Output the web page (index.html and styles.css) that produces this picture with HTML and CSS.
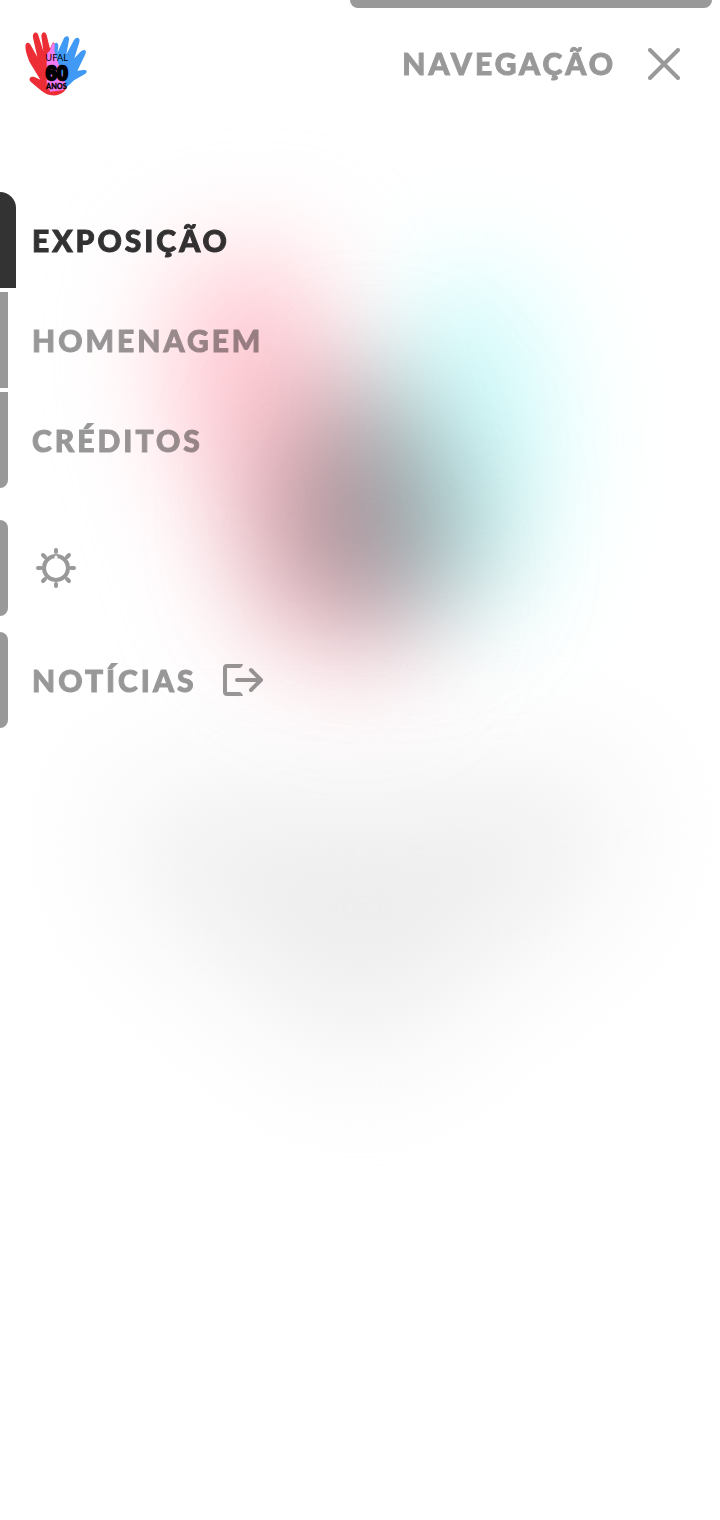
FILE: index.html
```html
<!DOCTYPE html>
<html lang="pt-BR">
<head>
<meta charset="utf-8">
<meta name="viewport" content="width=device-width, initial-scale=1">
<title>UFAL 60 Anos</title>
<link rel="stylesheet" href="styles.css">
</head>
<body>
<svg class="backdrop" viewBox="0 0 720 1520" aria-hidden="true">
  <defs>
    <filter id="soft" x="-100%" y="-100%" width="300%" height="300%" color-interpolation-filters="sRGB"><feGaussianBlur stdDeviation="56"/></filter>
    <filter id="softer" x="-100%" y="-100%" width="300%" height="300%" color-interpolation-filters="sRGB"><feGaussianBlur stdDeviation="66"/></filter>
  </defs>
  <path class="glow-shade" filter="url(#softer)" d="M120 790 L350 800 L620 770 L590 890 L460 980 L360 1070 L270 990 L150 900Z"/>
  <path class="glow-red" filter="url(#soft)" d="M180 270 L290 250 L370 430 L430 600 L370 680 L260 630 L170 400Z"/>
  <path class="glow-cyan" filter="url(#soft)" d="M430 270 L530 290 L560 450 L520 600 L400 620 L330 560 L370 430Z"/>
  <path class="glow-core" filter="url(#soft)" d="M350 370 L400 380 L480 500 L460 600 L370 620 L280 590 L270 470Z"/>
</svg>

<header class="top">
  <a class="logo" href="#" aria-label="UFAL 60 Anos">
    <svg viewBox="0 0 192 192">
      <path fill="#ec2d35" d="M18 92C9 71 2 50 5 38C9 28 18 32 22 43L40 75L27 17C25 4 35-4 42 7L58 57L52 12C54-3 65-2 68 10L78 50L84 36C90 25 95 36 91 52L132 154C128 180 108 193 82 190C63 187 53 176 42 168L20 149C11 139 22 131 33 136L49 143Z"/>
      <path fill="#4099f5" d="M78 65L91 36C98 27 106 36 102 50L100 63L119 20C127 7 139 13 134 29L127 67L150 24C160 11 171 19 165 34L151 79L168 61C180 49 190 54 184 67L160 116L173 115C188 112 193 119 183 126L150 145L128 166L80 170Z"/>
      <path fill="#f37af0" d="M78 55L84 37C92 28 94 41 91 54L94 70L125 155L118 174L79 179L68 160V66Z"/>
      <text class="logo-ufal" x="64" y="87">UFAL</text>
      <text class="logo-sixty" x="65" y="144">60</text>
      <text class="logo-anos" x="66" y="172">ANOS</text>
    </svg>
  </a>
  <button class="toggle" type="button">
    <span class="label">NAVEGAÇÃO</span>
    <svg class="close" viewBox="0 0 32 32" aria-hidden="true"><path d="M2 2L30 30M30 2L2 30"/></svg>
  </button>
</header>

<nav class="menu" aria-label="Navegação">
  <div class="group">
    <a class="item active" href="#" aria-current="page"><span class="label">EXPOSIÇÃO</span></a>
    <a class="item" href="#"><span class="label">HOMENAGEM</span></a>
    <a class="item last" href="#"><span class="label">CRÉDITOS</span></a>
  </div>
  <div class="extras">
    <button class="item single" type="button" aria-label="Alternar tema">
      <svg class="sun" viewBox="0 0 48 48" aria-hidden="true">
        <circle cx="24" cy="24" r="12"/>
        <path d="M24 6V8M24 40V42M6 24H9M39 24H42M11 11L13 13M35 35L37 37M37 11L35 13M13 35L11 37"/>
        <path class="notch" d="M22 14L24 11L26 14Z"/>
      </svg>
    </button>
    <a class="item single" href="#">
      <span class="label">NOTÍCIAS</span>
      <svg class="exit" viewBox="0 0 40 32" aria-hidden="true">
        <path class="frame" d="M20 0H4Q0 0 0 4V28Q0 32 4 32H20Q19 28 16 28H4V4H16Q19 4 20 0Z"/>
        <path d="M14 16H37M28 6L38 16L28 26"/>
      </svg>
    </a>
  </div>
</nav>
</body>
</html>
```
FILE: styles.css
```css
* { box-sizing: border-box; }

body {
  margin: 0;
  min-height: 100vh;
  position: relative;
  overflow-x: hidden;
  background: #fff;
  color: #000;
  font: 900 30px/40px Lato, "Liberation Sans", sans-serif;
  letter-spacing: 3px;
}

a { color: inherit; text-decoration: none; }

button {
  border: 0;
  margin: 0;
  padding: 0;
  background: none;
  color: inherit;
  font: inherit;
  letter-spacing: inherit;
  text-align: left;
  cursor: pointer;
}

svg { display: block; flex: none; }

.label {
  opacity: .4;
  -webkit-text-stroke: 1px currentColor;
}

.backdrop {
  position: absolute;
  z-index: -1;
  top: 0;
  left: 0;
  width: 100%;
}
.backdrop > * { mix-blend-mode: multiply; }
.glow-red { fill: #ffc6d0; }
.glow-cyan { fill: #d0fcfc; }
.glow-core { fill: #bababa; }
.glow-shade { fill: #ededed; }

.top {
  display: flex;
  justify-content: space-between;
  align-items: flex-start;
  padding: 0 8px 0 24px;
}

.logo { margin-top: 32px; }
.logo svg { width: 64px; height: 64px; overflow: visible; }
.logo text { fill: #000; letter-spacing: 0; }
.logo-ufal { font: 400 28px Lato, sans-serif; }
.logo-sixty {
  font: 700 60px "Liberation Sans", sans-serif;
  stroke: #000;
  stroke-width: 7px;
}
.logo-anos {
  font: 900 22px Lato, sans-serif;
  stroke: #000;
  stroke-width: 1px;
}

.toggle {
  display: grid;
  grid-template-columns: auto auto;
  grid-template-rows: 8px 112px;
  align-items: center;
  column-gap: 32px;
  height: 128px;
  padding-bottom: 8px;
}
.toggle::before {
  content: "";
  grid-column: 1 / -1;
  align-self: stretch;
  background: #999;
  border-radius: 0 0 8px 8px;
}
.toggle .label { padding: 0 0 2px 52px; }
.toggle .close { margin-right: 32px; }

.close { width: 32px; height: 32px; }
.close, .sun, .exit {
  fill: none;
  stroke: #999;
  stroke-width: 4px;
  stroke-linecap: round;
  stroke-linejoin: round;
}

.menu { padding-top: 64px; }
.group { display: grid; gap: 4px; }
.extras { display: grid; gap: 16px; margin-top: 32px; }

.item {
  display: grid;
  grid-template-columns: 8px auto auto;
  justify-content: start;
  align-items: center;
  column-gap: 24px;
  height: 96px;
}
.item::before {
  content: "";
  align-self: stretch;
  background: #999;
}
.item.active {
  grid-template-columns: 16px auto;
  column-gap: 16px;
}
.item.active .label { opacity: .8; }
.item.active::before { background: #333; border-top-right-radius: 16px; }
.item.last::before { border-bottom-right-radius: 8px; }
.item.single::before { border-radius: 0 8px 8px 0; }

.sun { width: 48px; height: 48px; }
.sun .notch { fill: #fff; stroke: none; }
.exit { width: 40px; height: 32px; margin-left: 2px; opacity: .4; stroke: #000; }
.exit .frame { fill: #000; stroke: none; }
```
